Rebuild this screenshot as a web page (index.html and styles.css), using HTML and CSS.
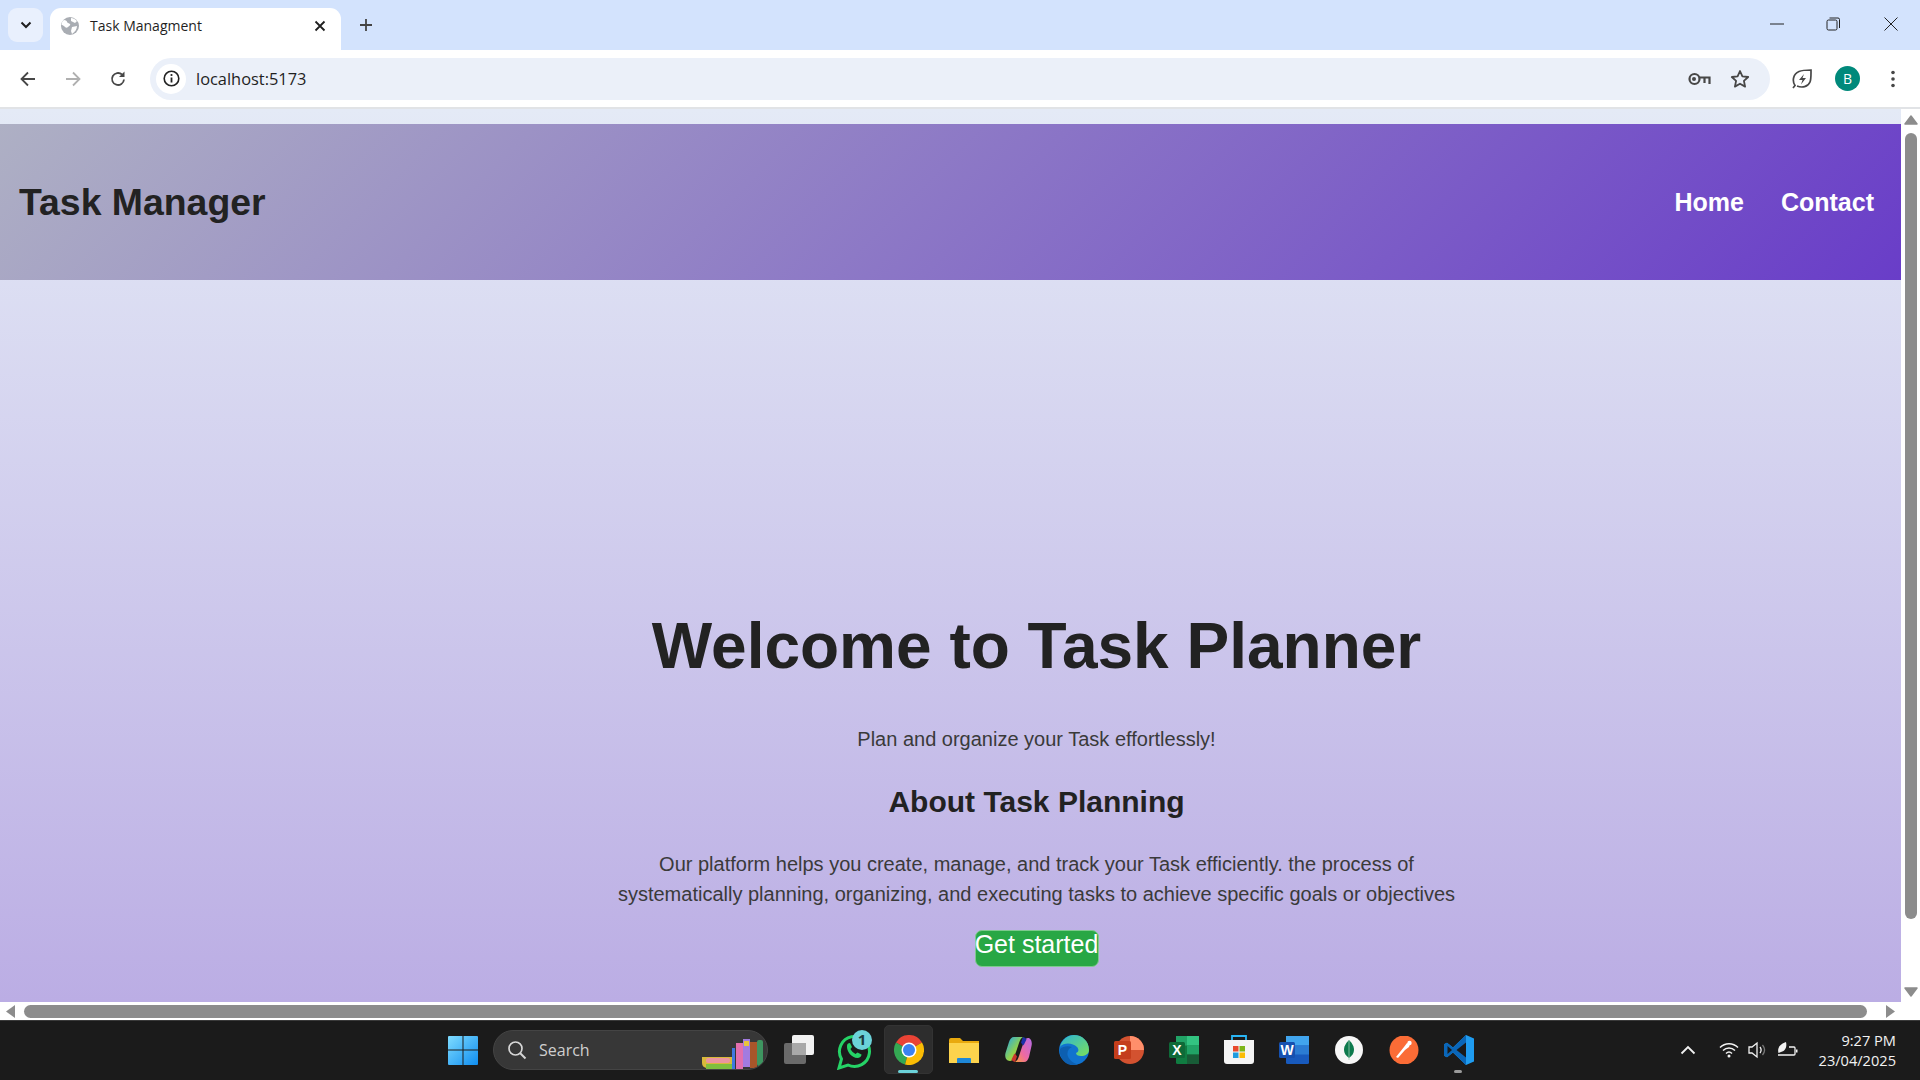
FILE: index.html
```html
<!DOCTYPE html>
<html lang="en">
<head>
<meta charset="utf-8">
<title>Task Managment</title>
<link rel="stylesheet" href="styles.css">
</head>
<body>
<div class="screen">
  <div class="tabstrip">
    <div class="tabsearch"><svg width="14" height="14" viewBox="0 0 14 14"><path d="M2.500 4.500 7 9l4.500-4.500" fill="none" stroke="#1f1f1f" stroke-width="2"/></svg></div>
    <div class="tab">
      <svg class="favicon" width="18" height="18" viewBox="0 0 18 18"><circle cx="9" cy="9" r="9" fill="#a9adb3"/><path d="M3 3c2 0 3 1 3 2s2 1 3 2-1 2-2 3-2 1-3 0-2-2-3-2 0-4 2-5zM10 1c2 0 4 1 6 3l-2 2-2-1-2-1zM11 10l5-1c0 3-2 6-5 8l-1-3z" fill="#fff"/></svg>
      <span class="tabtitle">Task Managment</span>
      <svg class="tabclose" width="12" height="12" viewBox="0 0 12 12"><path d="M1.500 1.500l9 9M10.500 1.500l-9 9" stroke="#1f1f1f" stroke-width="1.800"/></svg>
    </div>
    <svg class="newtab" width="14" height="14" viewBox="0 0 14 14"><path d="M7 1v12M1 7h12" stroke="#444" stroke-width="1.800"/></svg>
    <div class="winctrls">
      <svg width="14" height="14" viewBox="0 0 14 14"><path d="M0 7h14" stroke="#222" stroke-width="1"/></svg>
      <svg width="14" height="14" viewBox="0 0 14 14"><rect x="1" y="3" width="10" height="10" rx="1.500" fill="none" stroke="#222"/><path d="M3.500 1H12a1.500 1.500 0 0 1 1.500 1.500V11" fill="none" stroke="#222"/></svg>
      <svg class="winclose" width="14" height="14" viewBox="0 0 14 14"><path d="M.5.500l13 13M13.500.500l-13 13" stroke="#222" stroke-width="1"/></svg>
    </div>
  </div>
  <div class="toolbar">
    <svg class="navicon" width="18" height="18" viewBox="0 0 18 18"><path d="M16 9H3M9 2.500 2.500 9 9 15.500" fill="none" stroke="#474747" stroke-width="1.800"/></svg>
    <svg class="navicon fwd" width="18" height="18" viewBox="0 0 18 18"><path d="M2 9h13M9 2.500 15.500 9 9 15.500" fill="none" stroke="#b0b0b0" stroke-width="1.800"/></svg>
    <svg class="navicon reload" width="18" height="18" viewBox="0 0 18 18"><path d="M15 9.500A6 6 0 1 1 13 4.500" fill="none" stroke="#474747" stroke-width="1.800"/><path d="M15.500 1.500v5.500H10z" fill="#474747"/></svg>
    <div class="omnibox">
      <span class="infochip"><svg width="17" height="17" viewBox="0 0 17 17"><circle cx="8.500" cy="8.500" r="7.300" fill="none" stroke="#222" stroke-width="1.600"/><path d="M8.500 7.500v5" stroke="#222" stroke-width="1.800"/><circle cx="8.500" cy="5" r="1.100" fill="#222"/></svg></span>
      <span class="url">localhost:5173</span>
      <svg class="keyicon" width="23" height="14" viewBox="0 0 23 14"><circle cx="6.500" cy="7" r="5" fill="none" stroke="#474747" stroke-width="2.200"/><circle cx="6" cy="7" r="2" fill="#474747"/><path d="M11.500 5.500H21.500V12M16.500 6v5" fill="none" stroke="#474747" stroke-width="2.200"/></svg>
      <svg class="staricon" width="20" height="20" viewBox="0 0 20 20"><path d="M10 2l2.400 5.400 5.800.6-4.300 3.900 1.200 5.700L10 14.700 4.900 17.600l1.200-5.700L1.800 8l5.800-.6z" fill="none" stroke="#474747" stroke-width="1.800" stroke-linejoin="round"/></svg>
    </div>
    <svg class="leaficon" width="20" height="20" viewBox="0 0 20 20"><path d="M1 19l2-2.500C0 12 1 5 7 2.500 10 1.200 15.500 1 19 1c0 4 .2 9-1 12-2 5-8 6-13 4" fill="none" stroke="#474747" stroke-width="1.700"/><path d="M12 5 7 11h3.500l-1.500 4.500 5-6.500h-3.500z" fill="#474747"/></svg>
    <span class="avatar">B</span>
    <svg class="menuicon" width="6" height="18" viewBox="0 0 6 18"><circle cx="3" cy="2.500" r="1.800" fill="#474747"/><circle cx="3" cy="9" r="1.800" fill="#474747"/><circle cx="3" cy="15.500" r="1.800" fill="#474747"/></svg>
  </div>
  <div class="viewrow">
    <div class="page">
      <header class="siteheader">
        <div class="brand">Task Manager</div>
        <nav class="sitenav"><span>Home</span><span>Contact</span></nav>
      </header>
      <main class="hero">
        <h1>Welcome to Task Planner</h1>
        <p class="lead">Plan and organize your Task effortlessly!</p>
        <h2>About Task Planning</h2>
        <p class="about">Our platform helps you create, manage, and track your Task efficiently. the process of systematically planning, organizing, and executing tasks to achieve specific goals or objectives</p>
        <button class="cta">Get started</button>
      </main>
    </div>
    <div class="vscroll">
      <svg width="14" height="10" viewBox="0 0 14 10"><path d="M7 1l6 8H1z" fill="#8c8c8c" stroke="#8c8c8c" stroke-width="1.500" stroke-linejoin="round"/></svg>
      <div class="vthumb"></div>
      <svg width="14" height="10" viewBox="0 0 14 10"><path d="M7 9l6-8H1z" fill="#8c8c8c" stroke="#8c8c8c" stroke-width="1.500" stroke-linejoin="round"/></svg>
    </div>
  </div>
  <div class="hscroll">
    <svg width="9" height="13" viewBox="0 0 9 13"><path d="M0 6.500 9 0v13z" fill="#8c8c8c"/></svg>
    <div class="hthumb"></div>
    <svg width="9" height="13" viewBox="0 0 9 13"><path d="M9 6.500 0 0v13z" fill="#8c8c8c"/></svg>
  </div>
  <div class="taskbar">
    <div class="slot"><svg width="30" height="30" viewBox="0 0 30 30"><defs><linearGradient id="win" x1="0" y1="0" x2="1" y2="1"><stop offset="0" stop-color="#7fdcff"/><stop offset="1" stop-color="#0f8df0"/></linearGradient></defs><path d="M1 1h13.500v13.500H0V2a1 1 0 0 1 1-1zM15.500 1H29a1 1 0 0 1 1 1v12.500H15.500zM0 15.500h14.500V30H1a1 1 0 0 1-1-1zM15.500 15.500H30V29a1 1 0 0 1-1 1H15.500z" fill="url(#win)"/></svg></div>
    <div class="searchbox">
      <svg width="20" height="20" viewBox="0 0 20 20"><circle cx="8.500" cy="8.500" r="6.500" fill="none" stroke="#d6d6d6" stroke-width="1.700"/><path d="M13 13l5.500 5.500" stroke="#d6d6d6" stroke-width="2"/></svg>
      <span class="searchlabel">Search</span>
      <svg class="books" width="62" height="30" viewBox="0 0 62 30"><path d="M0 18h30v11H6q-6 0-6-5z" fill="#d9b93a"/><rect x="4" y="19" width="24" height="5" rx="2" fill="#ec94a0"/><rect x="4" y="25" width="26" height="5" fill="#7fbf3f"/><rect x="30" y="9" width="3" height="21" fill="#3f78e0"/><rect x="34" y="4" width="7" height="26" fill="#e36fae"/><rect x="41" y="0" width="7" height="28" fill="#a27be0"/><rect x="42" y="2" width="5" height="5" fill="#e8c53a"/><rect x="48" y="3" width="7" height="26" fill="#a8562a"/><rect x="55" y="1" width="6" height="26" rx="2" fill="#3e9560"/></svg>
    </div>
    <div class="slot"><svg width="30" height="30" viewBox="0 0 30 30"><rect x="0" y="8" width="22" height="21" rx="2" fill="#6a6a6a"/><rect x="8" y="0" width="22" height="20" rx="2" fill="#f2f2f2"/><rect x="8" y="8" width="14" height="12" fill="#a9a9a9"/></svg></div>
    <div class="slot"><svg class="wa" width="38" height="40" viewBox="0 0 38 40"><path d="M4 38l2.500-9A15 15 0 1 1 13 35z" fill="none" stroke="#25d366" stroke-width="3"/><path d="M12 16c0-2 1-3 3-3l2 4-1.500 2c1 2 3 4 5 5l2-1.500 4 2c0 2-2 3.500-4 3.500-6 0-11-7-10.500-12z" fill="#25d366"/><circle cx="27" cy="10" r="10" fill="#6bd2d9"/><text class="wabadge" x="27" y="15">1</text></svg></div>
    <div class="slot active"><svg width="30" height="30" viewBox="0 0 30 30"><path d="M15 15 28 7.500A15 15 0 0 0 2 7.500z" fill="#ea4335"/><path d="M15 15 2 7.500A15 15 0 0 0 11 29.500z" fill="#34a853"/><path d="M15 15 11 29.500A15 15 0 0 0 28 7.500z" fill="#fbbc04"/><circle cx="15" cy="15" r="7.500" fill="#fff"/><circle cx="15" cy="15" r="6" fill="#3b82f0"/></svg><span class="runbar"></span></div>
    <div class="slot"><svg width="30" height="26" viewBox="0 0 30 26"><path d="M0 3a2 2 0 0 1 2-2h9l3 3h16v22H0z" fill="#e9a90e"/><rect y="6" width="30" height="20" fill="#fcd34d"/><path d="M8 26v-4a1 1 0 0 1 1-1h12a1 1 0 0 1 1 1v4z" fill="#1e88d8"/></svg></div>
    <div class="slot"><svg width="28" height="25" viewBox="0 0 28 25"><defs><linearGradient id="cop1" x1="0" y1="0" x2="1" y2="1"><stop offset="0" stop-color="#1fa4f0"/><stop offset=".55" stop-color="#8fd14f"/><stop offset="1" stop-color="#f7c325"/></linearGradient><linearGradient id="cop2" x1="1" y1="0" x2="0" y2="1"><stop offset="0" stop-color="#b66be8"/><stop offset=".6" stop-color="#ee6aa0"/><stop offset="1" stop-color="#f7a03c"/></linearGradient></defs><path d="M9 0h9c-2 1-3 3-4 6l-3 9-2 5c-1 2-2 4-4 4C1 24-.5 20 .5 16L4 5C5 2 6.500 0 9 0z" fill="url(#cop1)"/><path d="M19 25h-9c2-1 3-3 4-6l3-9 2-5c1-2 2-4 4-4 3 0 4.500 4 3.500 8L24 20c-1 3-2.500 5-5 5z" fill="url(#cop2)"/><path d="M18 0c2 .3 3 1.500 3.500 2.500l-2.500 5-1 1-2-3z" fill="#1c2fa8"/><path d="M10 25c-2-.3-3-1.500-3.500-2.500l2.500-5 1-1 2 3z" fill="#c8352c"/></svg></div>
    <div class="slot"><svg width="30" height="30" viewBox="0 0 30 30"><defs><linearGradient id="edg" x1="0" y1="0" x2="1" y2="1"><stop offset="0" stop-color="#2bb4d8"/><stop offset="1" stop-color="#7be05a"/></linearGradient></defs><circle cx="15" cy="15" r="15" fill="#1173cf"/><path d="M1 12C3 4 9 0 15 0c8 0 15 6 15 15 0 4-4 6-8 6-3 0-5-1-5-3 3-1 3-4 1-6-4-4-13-5-17 0z" fill="url(#edg)"/><path d="M13 12c-3 1-5 4-4.500 8 .8 4 5 8 10.500 9.500-3 1-6.500 1-9 0C4 27 0 21 1 14c3-3 8-3.500 12-2z" fill="#0d5fb0"/></svg></div>
    <div class="slot"><svg width="30" height="28" viewBox="0 0 30 28"><circle cx="16" cy="14" r="14" fill="#d35230"/><path d="M16 0a14 14 0 0 1 14 14H16z" fill="#ff8f6b"/><rect x="0" y="5" width="17" height="18" rx="1.500" fill="#c43e1c"/><text class="appletter" x="8.500" y="19">P</text></svg></div>
    <div class="slot"><svg width="30" height="28" viewBox="0 0 30 28"><rect x="7" width="23" height="28" rx="1.500" fill="#107c41"/><rect x="18" width="12" height="9.500" fill="#33c481"/><rect x="7" width="11" height="9.500" fill="#21a366"/><rect x="18" y="9.500" width="12" height="9" fill="#21a366"/><rect x="18" y="18.500" width="12" height="9.500" fill="#185c37"/><rect y="6" width="16" height="16" rx="1.500" fill="#0e6a38"/><text class="appletter" x="8" y="19">X</text></svg></div>
    <div class="slot"><svg width="30" height="30" viewBox="0 0 30 30"><path d="M8 5V1h14v4" fill="none" stroke="#29b6f6" stroke-width="1.800"/><path d="M0 5h30v21a3 3 0 0 1-3 3H3a3 3 0 0 1-3-3z" fill="#f4f4f4"/><rect x="9" y="11" width="5.500" height="5.500" fill="#e8492c"/><rect x="15.500" y="11" width="5.500" height="5.500" fill="#7cb518"/><rect x="9" y="17.500" width="5.500" height="5.500" fill="#1f9bde"/><rect x="15.500" y="17.500" width="5.500" height="5.500" fill="#fbbc04"/></svg></div>
    <div class="slot"><svg width="30" height="28" viewBox="0 0 30 28"><rect x="7" width="23" height="28" rx="1.500" fill="#185abd"/><rect x="7" width="23" height="9.500" fill="#41a5ee"/><rect x="7" y="9.500" width="23" height="9" fill="#2b7cd3"/><rect y="6" width="16" height="16" rx="1.500" fill="#1651b0"/><text class="appletter" x="8" y="19">W</text></svg></div>
    <div class="slot"><svg width="28" height="28" viewBox="0 0 28 28"><circle cx="14" cy="14" r="14" fill="#f7f7f7"/><path d="M14 4c4 4 5 7 5 10 0 3-2 6-5 8-3-2-5-5-5-8 0-3 1-6 5-10z" fill="#0d7a4d"/><path d="M14 4v20" stroke="#9ccdb4" stroke-width=".8"/></svg></div>
    <div class="slot"><svg width="30" height="28" viewBox="0 0 30 28"><circle cx="15" cy="14" r="14.500" fill="#fb6c36"/><path d="M7 21l8-10 3-4 3 1-1 3-4 3-7 8z" fill="#fff"/><circle cx="20.500" cy="7" r="2.200" fill="#fff"/></svg></div>
    <div class="slot"><svg width="30" height="30" viewBox="0 0 30 30"><path d="M22 0l8 3.500v23L22 30 9 17.500l-6 4.800-3-1.600V9.300l3-1.600 6 4.800z" fill="#1f9cf0"/><path d="M22 0 9 12.500 3 7.700 0 9.300v11.400l3 1.600 6-4.800L22 30z" fill="#0a66b8"/><path d="M22 7.500 12.500 15 22 22.500zM3.500 11v8L8 15z" fill="#1a1a1a"/></svg><span class="runbar idle"></span></div>
    <div class="tray">
      <svg class="caret" width="16" height="10" viewBox="0 0 16 10"><path d="M1.500 8.500 8 2l6.500 6.500" fill="none" stroke="#f2f2f2" stroke-width="1.800"/></svg>
      <svg width="20" height="16" viewBox="0 0 20 16"><path d="M1 5.500c5-5 13-5 18 0M4 8.500c3.500-3.500 8.500-3.500 12 0M7 11.500c2-2 4-2 6 0" fill="none" stroke="#f2f2f2" stroke-width="1.500"/><circle cx="10" cy="14" r="1.500" fill="#f2f2f2"/></svg>
      <svg width="20" height="18" viewBox="0 0 20 18"><path d="M1 6h3l5-4v14l-5-4H1z" fill="none" stroke="#f2f2f2" stroke-width="1.300"/><path d="M12 6c1.500 2 1.500 4 0 6" fill="none" stroke="#f2f2f2" stroke-width="1.300"/><path d="M14.500 4c2.500 3 2.500 7 0 10" fill="none" stroke="#777" stroke-width="1.300"/></svg>
      <svg width="21" height="18" viewBox="0 0 21 18"><path d="M1 14H17a1 1 0 0 0 1-1V7a1 1 0 0 0-1-1H12" fill="none" stroke="#f2f2f2" stroke-width="1.300"/><path d="M19 8.500h1.500v3H19z" fill="#f2f2f2"/><path d="M1.500 12C0 7 3 3 9 1c1 4 0 9-5 10z" fill="#f2f2f2"/></svg>
      <div class="clock"><span>9:27 PM</span><span>23/04/2025</span></div>
    </div>
  </div>
</div>
</body>
</html>
```
FILE: styles.css
```css
* { box-sizing: border-box; }
html, body { margin: 0; height: 100%; overflow: hidden; }
body { font-family: "Liberation Sans", Arial, sans-serif; }
.screen { width: 1920px; height: 1080px; display: flex; flex-direction: column; }

.tabstrip { height: 50px; flex: none; background: #d3e3fd; display: flex; align-items: flex-end; position: relative; padding-left: 8px; }
.tabsearch { width: 35px; height: 34px; margin-bottom: 8px; border-radius: 9px; background: #e9f0fd; display: flex; align-items: center; justify-content: center; }
.tab { width: 291px; height: 42px; margin-left: 7px; background: #fff; border-radius: 11px 11px 0 0; display: flex; align-items: center; padding: 0 15px 6px 11px; }
.tabtitle { font: 14px "Open Sans", sans-serif; color: #1f1f1f; margin: 0 0 2px 11px; flex: 1; }
.newtab { margin: 0 0 18px 18px; }
.winctrls { margin-left: auto; display: flex; gap: 42px; margin-bottom: 19px; margin-right: 22px; }
.winclose { margin-left: 2px; }

.toolbar { height: 59px; flex: none; background: #fff; border-radius: 12px 12px 0 0; border-bottom: 2px solid #e1e3e6; display: flex; align-items: center; padding: 0 0 0 19px; }
.navicon { flex: none; }
.fwd { margin-left: 27px; }
.reload { margin-left: 27px; }
.omnibox { width: 1620px; height: 42px; margin-left: 23px; background: #ebf0f9; border-radius: 21px; display: flex; align-items: center; padding-left: 6px; }
.infochip { width: 30px; height: 30px; border-radius: 50%; background: #fff; display: flex; align-items: center; justify-content: center; }
.url { font: 16.400px "Open Sans", sans-serif; color: #1f1f1f; margin-left: 10px; flex: 1; }
.keyicon { margin-right: 19px; }
.staricon { margin-right: 20px; }
.leaficon { margin-left: 22px; }
.avatar { width: 25px; height: 25px; margin-left: 23px; border-radius: 50%; background: #00897b; color: #fff; font: 14px/25px "Open Sans", sans-serif; text-align: center; }
.menuicon { margin-left: 30px; }

.viewrow { height: 893px; flex: none; display: flex; }
.page { width: 1901px; flex: none; padding-top: 15px; background: linear-gradient(to bottom, #e4eaf6, #bbade4); display: flex; flex-direction: column; }
.siteheader { height: 156px; flex: none; background: linear-gradient(135deg, #aeb0c4, #693dc8); display: flex; align-items: center; justify-content: space-between; padding: 1px 27px 0 19px; }
.brand { font-size: 37.400px; font-weight: 700; color: #222; }
.sitenav { display: flex; gap: 37px; font-size: 25px; font-weight: 700; color: #fff; }
.hero { flex: 1; padding: 329px 0 0 172px; display: flex; flex-direction: column; align-items: center; text-align: center; }
.hero h1 { margin: 0; font-size: 64px; line-height: 74px; font-weight: 700; color: #222; }
.lead { margin: 45px 0 0; font-size: 20px; line-height: 22px; color: #3a3a3a; }
.hero h2 { margin: 35px 0 0; font-size: 30px; line-height: 34px; font-weight: 700; color: #222; }
.about { margin: 30px 0 0; width: 860px; font-size: 20px; line-height: 30px; color: #3a3a3a; }
.cta { margin: 21px 0 0; width: 124px; height: 37px; padding: 0 0 8px; border: 1px solid #7ec98e; border-radius: 7px; background: #28a745; color: #fff; font: 25px "Liberation Sans", sans-serif; white-space: nowrap; display: flex; justify-content: center; align-items: center; }

.vscroll { width: 19px; flex: none; background: #fff; display: flex; flex-direction: column; align-items: center; padding: 6px 0 5px; }
.vthumb { width: 12px; height: 786px; margin: 8px 0 auto; border-radius: 6px; background: #8c8c8c; }
.hscroll { height: 18px; flex: none; background: #fff; display: flex; align-items: center; padding: 1px 25px 0 6px; }
.hthumb { width: 1843px; height: 13px; margin: 0 auto 0 9px; border-radius: 7px; background: #8c8c8c; }

.taskbar { height: 60px; flex: none; background: #1b1b1b; border-top: 1px solid #3a3a3a; display: flex; align-items: center; padding: 0 0 2px 435px; }
.slot { width: 55px; height: 49px; flex: none; display: flex; align-items: center; justify-content: center; position: relative; }
.slot.active::before { content: ""; position: absolute; left: 3px; right: 3px; top: 0; bottom: 0; background: #2d2d2d; border: 1px solid #333; border-radius: 5px; }
.slot svg { position: relative; }
.runbar { position: absolute; left: 17px; bottom: 1px; width: 20px; height: 3px; border-radius: 2px; background: #6bd2d9; }
.runbar.idle { left: 23px; width: 8px; background: #9a9a9a; }
.searchbox { width: 275px; height: 40px; margin: 0 3px; flex: none; border-radius: 20px; background: #373737; border: 1px solid #444; display: flex; align-items: center; padding-left: 13px; position: relative; overflow: hidden; }
.searchlabel { font: 16px "Open Sans", sans-serif; color: #cfcfcf; margin-left: 12px; }
.books { position: absolute; right: 3px; bottom: 0; }
.wabadge { font: 700 15px "Open Sans", sans-serif; fill: #1b3b40; text-anchor: middle; }
.appletter { font: 700 14px "Liberation Sans", sans-serif; fill: #fff; text-anchor: middle; }

.tray { margin-left: auto; display: flex; align-items: center; padding-right: 24px; gap: 9px; color: #f2f2f2; }
.caret { margin-right: 14px; }
.clock { display: flex; flex-direction: column; align-items: flex-end; margin-left: 12px; font: 14.600px/20px "Open Sans", sans-serif; }
```
